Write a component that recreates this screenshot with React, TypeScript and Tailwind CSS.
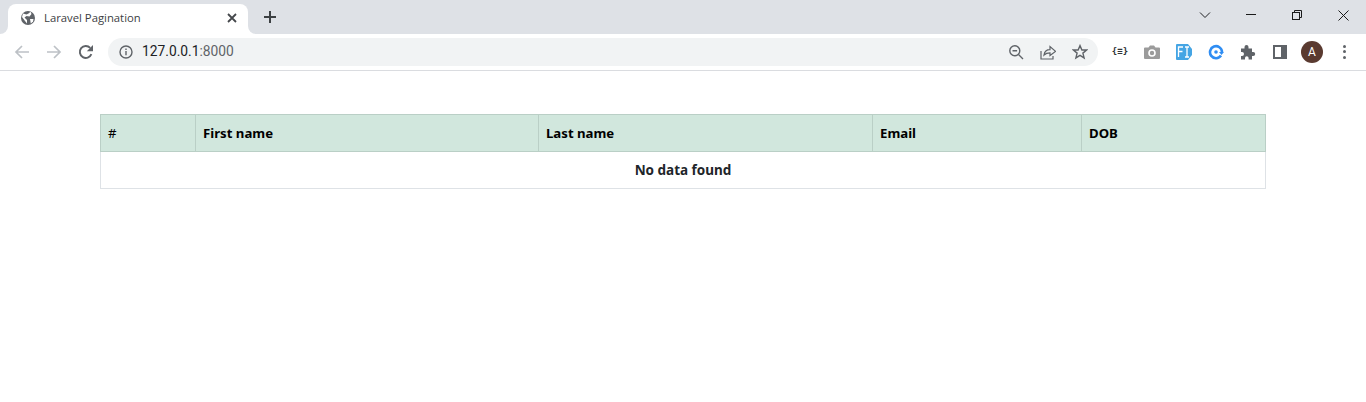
import { ReactNode } from "react";

const columns = [
  { label: "#", width: "w-[95px]", weight: "font-normal" },
  { label: "First name", width: "w-[343px]", weight: "font-bold" },
  { label: "Last name", width: "w-[334px]", weight: "font-bold" },
  { label: "Email", width: "w-[209px]", weight: "font-bold" },
  { label: "DOB", width: "w-[184px]", weight: "font-bold" },
];

function IconSlot({ children, className = "w-8" }: { children: ReactNode; className?: string }) {
  return <div className={`h-7 shrink-0 flex items-center justify-center ${className}`}>{children}</div>;
}

function TabStrip() {
  return (
    <div className="h-[34px] bg-[#dee1e6] flex items-end pl-2 font-['Open_Sans',sans-serif]">
      {/* Active tab */}
      <div className="relative w-[240px] h-[30px] bg-white rounded-t-lg flex items-center pl-3 pr-[11px] pb-[3px]">
        <div className="absolute -left-2 bottom-0 w-2 h-2 bg-white">
          <div className="w-2 h-2 bg-[#dee1e6] rounded-br-lg" />
        </div>
        <div className="absolute -right-2 bottom-0 w-2 h-2 bg-white">
          <div className="w-2 h-2 bg-[#dee1e6] rounded-bl-lg" />
        </div>
        <svg width="16" height="16" viewBox="0 0 16 16" className="shrink-0">
          <circle cx="8" cy="8" r="7" fill="#5f6368" />
          <path d="M3 3.5 6.5 4.5 8.5 3.5 10.5 1.8 11.5 4 9.5 6.5 6.5 6 4.5 7.5 7 10 7 13.5 5 11 2 7Z" fill="#fff" />
          <path d="M10 9 13.5 9 13 11.5 10.8 13.5Z" fill="#fff" />
        </svg>
        <span className="ml-2 text-[11.3px] leading-none text-[#3c4043] whitespace-nowrap">Laravel Pagination</span>
        <svg width="10" height="10" viewBox="0 0 10 10" className="ml-auto" stroke="#44474b" strokeWidth="1.8" fill="none">
          <path d="M1 1 9 9M9 1 1 9" />
        </svg>
      </div>
      <div className="ml-[15px] mb-[10px] shrink-0">
        <svg width="14" height="14" viewBox="0 0 14 14" stroke="#3c4043" strokeWidth="2" fill="none">
          <path d="M7 1v12M1 7h12" />
        </svg>
      </div>
      <div className="ml-auto flex items-center h-[34px] pb-[4px]">
        <div className="w-[46px] flex justify-center -mr-[23px] relative right-[23px]">
          <svg width="12" height="8" viewBox="0 0 12 8" stroke="#202124" fill="none" strokeWidth="1">
            <path d="M1 1.5 6 6.5 11 1.5" />
          </svg>
        </div>
        <div className="w-[46px] flex justify-center">
          <svg width="10" height="2" viewBox="0 0 10 2" stroke="#1a1a1a" strokeWidth="1" fill="none">
            <path d="M0 .5h10" />
          </svg>
        </div>
        <div className="w-[46px] flex justify-center">
          <svg width="10" height="10" viewBox="0 0 10 10" stroke="#1a1a1a" strokeWidth="1" fill="none">
            <rect x=".5" y="2.5" width="7" height="7" />
            <path d="M2.5 2.5V.5h7v7h-2" />
          </svg>
        </div>
        <div className="w-[46px] flex justify-center">
          <svg width="11" height="11" viewBox="0 0 11 11" stroke="#1a1a1a" strokeWidth="1" fill="none">
            <path d="M.5.5l10 10M10.5.5l-10 10" />
          </svg>
        </div>
      </div>
    </div>
  );
}

function Omnibox() {
  return (
    <div className="w-[990px] h-7 rounded-full bg-[#f1f3f4] flex items-center shrink-0 ml-[6px] pl-[11px] pr-[2px]">
      <svg width="14" height="14" viewBox="0 0 14 14" fill="none" stroke="#5f6368" strokeWidth="1.4">
        <circle cx="7" cy="7" r="6" />
        <path d="M7 6v4.2M7 3.4v1.5" />
      </svg>
      <span className="ml-[9px] text-[13.8px] leading-none whitespace-nowrap font-['Roboto',sans-serif] text-[#202124]">
        127.0.0.1<span className="text-[#5f6368]">:8000</span>
      </span>
      <div className="ml-auto flex items-center">
        <IconSlot>
          <svg width="16" height="16" viewBox="0 0 16 16" fill="none" stroke="#5f6368" strokeWidth="1.4">
            <circle cx="6.8" cy="6.8" r="5" />
            <path d="M4.5 6.8h4.6M10.5 10.5 15 15" />
          </svg>
        </IconSlot>
        <IconSlot>
          <svg width="16" height="16" viewBox="0 0 16 16" fill="none" stroke="#5f6368" strokeWidth="1.2">
            <path d="M1 7v8h12v-3" />
            <path d="M4 11C4.5 7.5 7 5.6 10 5.6V2.6L15.5 7.4 10 11.6V8.8C7.5 8.8 5.5 9.5 4 11Z" />
          </svg>
        </IconSlot>
        <IconSlot>
          <svg width="16" height="16" viewBox="0 0 16 16" fill="none" stroke="#5f6368" strokeWidth="1.4">
            <path d="M8 1.6 9.9 6h4.7l-3.7 3.1 1.2 4.8L8 11.3l-4.1 2.6 1.2-4.8L1.4 6h4.7Z" />
          </svg>
        </IconSlot>
      </div>
    </div>
  );
}

function Toolbar() {
  return (
    <div className="h-[37px] pb-[1px] bg-white border-b border-[#dadce0] flex items-center pl-[6px] pr-[6px]">
      <IconSlot>
        <svg width="16" height="16" viewBox="0 0 16 16" fill="none" stroke="#bdc1c6" strokeWidth="1.7">
          <path d="M15 8H2M8 2 2 8l6 6" />
        </svg>
      </IconSlot>
      <IconSlot>
        <svg width="16" height="16" viewBox="0 0 16 16" fill="none" stroke="#bdc1c6" strokeWidth="1.7">
          <path d="M1 8h13M8 2l6 6-6 6" />
        </svg>
      </IconSlot>
      <IconSlot>
        <svg width="16" height="16" viewBox="0 0 16 16" fill="none">
          <path d="M13.4 10.2A6 6 0 1 1 12.2 3.8" stroke="#5f6368" strokeWidth="1.9" />
          <path d="M15 1v6.2H8.8Z" fill="#5f6368" />
        </svg>
      </IconSlot>
      <Omnibox />
      <div className="ml-[6px] flex items-center">
        <IconSlot>
          <span className="text-[9px] leading-none font-bold text-[#303336] font-['DejaVu_Sans_Mono',monospace]">{"{≡}"}</span>
        </IconSlot>
        <IconSlot>
          <svg width="16" height="14" viewBox="0 0 16 14">
            <path d="M1 2.5h3.5L6 .5h4l1.5 2H15a1 1 0 0 1 1 1V13a1 1 0 0 1-1 1H1a1 1 0 0 1-1-1V3.5a1 1 0 0 1 1-1Z" fill="#9b9b9b" />
            <circle cx="8" cy="8" r="3" fill="none" stroke="#fff" strokeWidth="1.6" />
          </svg>
        </IconSlot>
        <IconSlot>
          <svg width="16" height="16" viewBox="0 0 16 16">
            <path d="M1 0h11l4 5v6l-4 5H1a1 1 0 0 1-1-1V1a1 1 0 0 1 1-1Z" fill="#45a5e4" />
            <path d="M2.5 13V3H7M2.5 7.5h4M9 3h4M9 13h4M11 3v10" fill="none" stroke="#fff" strokeWidth="1.3" />
          </svg>
        </IconSlot>
        <IconSlot>
          <svg width="16" height="16" viewBox="0 0 16 16" fill="none">
            <path d="M13 11.5A6 6 0 1 1 14 8" stroke="#2f8df3" strokeWidth="2.6" />
            <circle cx="8" cy="8" r="1.8" fill="#2f8df3" />
            <path d="M11 8h5l-2.5 3Z" fill="#2f8df3" />
          </svg>
        </IconSlot>
        <IconSlot>
          <svg width="16" height="16" viewBox="0 0 16 16">
            <path d="M1 4.5h3.5V3a2 2 0 0 1 4 0v1.5H12V8h1.2a2 2 0 0 1 0 4H12v3.5H8.6V14a1.8 1.8 0 0 0-3.6 0v1.5H1V12h1a2 2 0 0 0 0-4H1Z" fill="#5f6368" />
          </svg>
        </IconSlot>
        <IconSlot>
          <svg width="14" height="14" viewBox="0 0 14 14" fill="none">
            <rect x="1" y="1" width="12" height="12" stroke="#5f6368" strokeWidth="2" />
            <rect x="8" y="1" width="5" height="12" fill="#5f6368" />
          </svg>
        </IconSlot>
        <IconSlot>
          <div className="w-[22px] h-[22px] rounded-full bg-[#5a3a30] flex items-center justify-center text-white text-[12px] leading-none font-['Roboto',sans-serif]">
            A
          </div>
        </IconSlot>
        <IconSlot>
          <div className="flex flex-col gap-[2.5px]">
            <div className="w-[3px] h-[3px] rounded-full bg-[#5f6368]" />
            <div className="w-[3px] h-[3px] rounded-full bg-[#5f6368]" />
            <div className="w-[3px] h-[3px] rounded-full bg-[#5f6368]" />
          </div>
        </IconSlot>
      </div>
    </div>
  );
}

export default function App() {
  return (
    <div className="w-[1366px] h-[402px] bg-white overflow-hidden">
      <TabStrip />
      <Toolbar />

      {/* Page content */}
      <div className="px-[100px] pt-[43px] font-['Noto_Sans',sans-serif]">
        <table className="w-[1165px] table-fixed border-collapse text-[13.5px] leading-[20px] font-bold text-[#212529]">
          <thead>
            <tr className="bg-[#d1e7dd]">
              {columns.map((col) => (
                <th key={col.label} className={`${col.width} ${col.weight} h-[37px] px-[7px] pb-[1px] text-left text-[13.2px] text-black border border-[#bacfc6]`}>
                  {col.label}
                </th>
              ))}
            </tr>
          </thead>
          <tbody>
            <tr>
              <td colSpan={5} className="h-[37px] pb-[1px] text-center border border-[#dee2e6]">
                No data found
              </td>
            </tr>
          </tbody>
        </table>
      </div>
    </div>
  );
}
